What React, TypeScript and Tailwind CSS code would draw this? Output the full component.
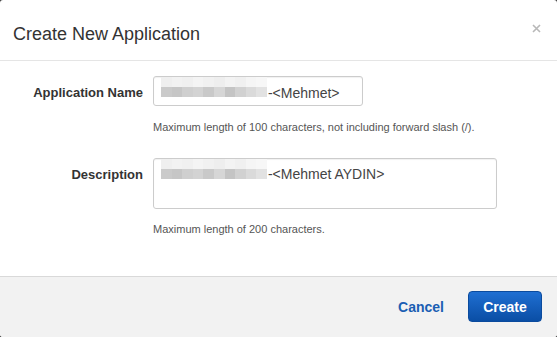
const blurTop = ["#efefef", "#f2f2f2", "#f0f0f0", "#f4f4f4", "#f1f1f1", "#eeeeee", "#f3f3f3", "#f0f0f0", "#f5f5f5", "#f7f7f7"];
const blurBottom = ["#cacaca", "#c6c6c6", "#cfcfcf", "#d3d3d3", "#c9c9c9", "#d6d6d6", "#c4c4c4", "#d1d1d1", "#dadada", "#e2e2e2"];

const Blurred = () => (
  <div className="flex shrink-0">
    {blurTop.map((c, i) => (
      <div key={i} className="flex flex-col w-[10.6px]">
        <div className="h-[10px]" style={{ backgroundColor: c }} />
        <div className="h-[10px]" style={{ backgroundColor: blurBottom[i] }} />
      </div>
    ))}
  </div>
);

const App = () => {
  return (
    <div className="w-[557px] h-[337px] bg-[#3a3a3a] font-['Liberation_Sans',Arial,sans-serif]">
      <div className="flex flex-col w-full h-full bg-white rounded-[3px] overflow-hidden">
        {/* header */}
        <div className="h-[61px] shrink-0 flex items-start justify-between border-b border-[#e5e5e5] pl-[13px] pr-[16px]">
          <h1 className="text-[18px] leading-[20px] text-[#333] mt-[24px]">Create New Application</h1>
          <svg className="mt-[24px]" width="9" height="9" viewBox="0 0 9 9">
            <path d="M1 1L8 8M8 1L1 8" stroke="#b8b8b8" strokeWidth="1.6" />
          </svg>
        </div>

        {/* body */}
        <div className="flex-1 pt-[15px]">
          <div className="flex items-start gap-[10px]">
            <label className="w-[143px] shrink-0 text-right text-[13px] font-bold text-[#333] leading-[16px] mt-[9px]">
              Application Name
            </label>
            <div className="flex flex-col">
              <div className="w-[210px] h-[30px] border border-[#cccccc] rounded-[3px] shadow-[inset_0_1px_1px_rgba(0,0,0,0.06)] flex items-start pl-[7px] text-[14px] text-[#444] leading-[20px]">
                <Blurred />
                <span className="ml-[1px] mt-[6px]">-&lt;Mehmet&gt;</span>
              </div>
              <p className="mt-[14px] text-[11px] leading-[15px] text-[#555]">
                Maximum length of 100 characters, not including forward slash (/).
              </p>
            </div>
          </div>

          <div className="flex items-start gap-[10px] mt-[23px]">
            <label className="w-[143px] shrink-0 text-right text-[13px] font-bold text-[#333] leading-[16px] mt-[9px]">
              Description
            </label>
            <div className="flex flex-col">
              <div className="w-[344px] h-[51px] border border-[#cccccc] rounded-[3px] shadow-[inset_0_1px_1px_rgba(0,0,0,0.06)] flex items-start pl-[7px] text-[14px] text-[#444] leading-[20px]">
                <Blurred />
                <span className="ml-[1px] mt-[5px]">-&lt;Mehmet AYDIN&gt;</span>
              </div>
              <p className="mt-[13px] text-[11px] leading-[15px] text-[#555]">
                Maximum length of 200 characters.
              </p>
            </div>
          </div>
        </div>

        {/* footer */}
        <div className="h-[61px] shrink-0 bg-[#f2f2f2] border-t border-[#d9d9d9] flex items-start justify-end pr-[15px] pt-[14px] gap-[24px]">
          <button className="h-[31px] pt-[2px] text-[14px] font-bold text-[#1b5eb3]">Cancel</button>
          <button className="w-[74px] h-[31px] pt-[2px] rounded-[4px] border border-[#0b4b9e] bg-gradient-to-b from-[#1f6fd2] to-[#0a4ea5] text-[14px] font-bold text-white">
            Create
          </button>
        </div>
      </div>
    </div>
  );
};

export default App;
